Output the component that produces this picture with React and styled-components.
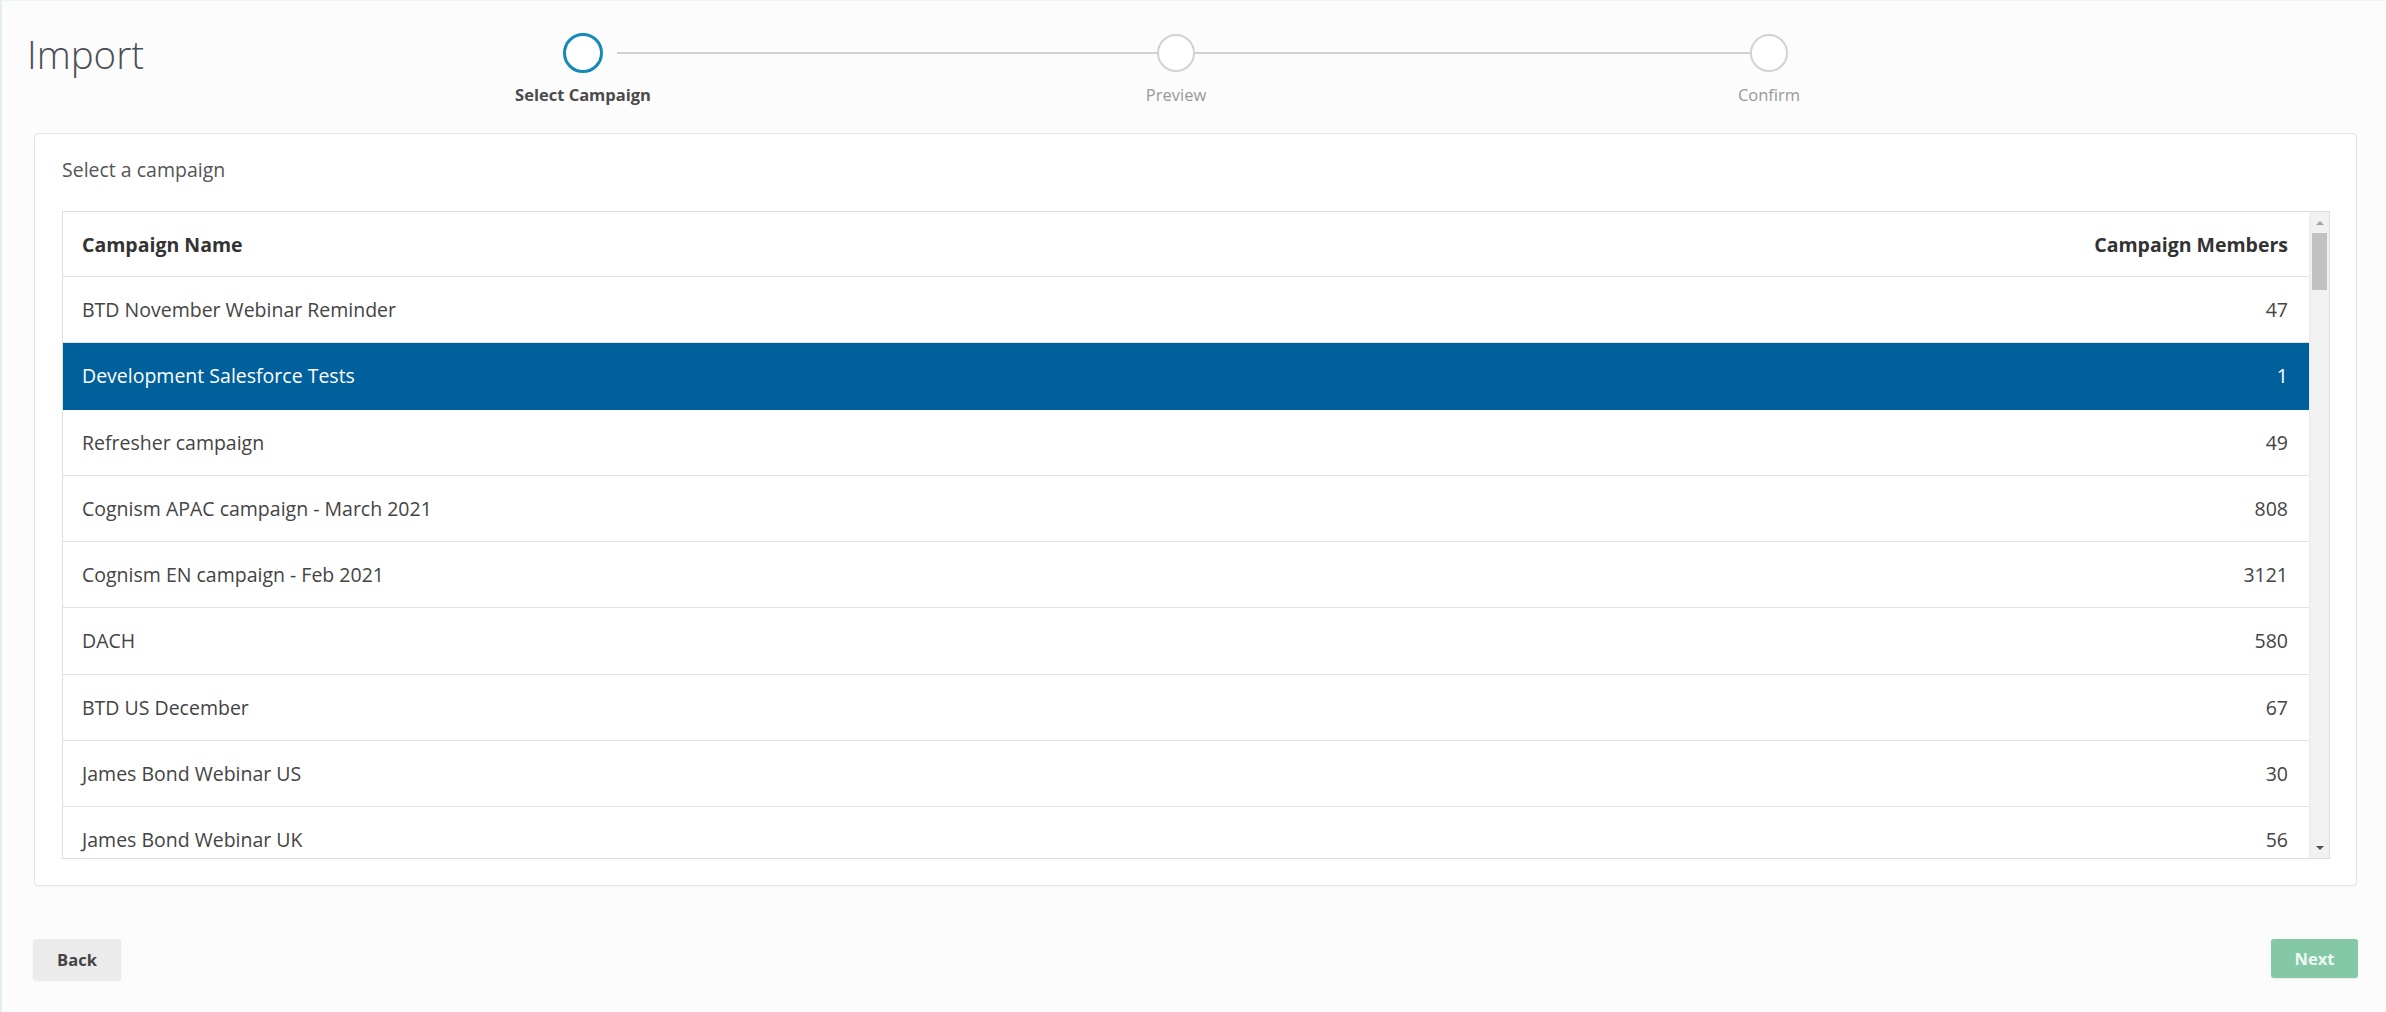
import React from "react";
import styled, { createGlobalStyle } from "styled-components";

const GlobalStyle = createGlobalStyle`
  html, body {
    margin: 0;
    padding: 0;
    background: #fcfcfc;
    font-family: "Open Sans", "Liberation Sans", sans-serif;
  }
  * { box-sizing: border-box; }
`;

const Page = styled.div`
  width: 2386px;
  height: 1012px;
  background: #fcfcfc;
  border-left: 2px solid #e4eef1;
  border-top: 1px solid #eef3f4;
  display: flex;
  flex-direction: column;
  overflow: hidden;
`;

const Header = styled.header`
  display: flex;
  height: 132px;
  padding-left: 25px;
`;

const Title = styled.h1`
  flex: 0 0 259.5px;
  margin: 28.5px 0 0;
  height: 48px;
  font-size: 38.5px;
  line-height: 48px;
  font-weight: 300;
  color: #4a4f55;
`;

const Stepper = styled.ol`
  display: grid;
  grid-template-columns: repeat(3, 593px);
  margin: 0;
  padding: 32px 0 0;
  list-style: none;
`;

const Step = styled.li`
  position: relative;
  display: flex;
  flex-direction: column;
  align-items: center;

  &::after {
    content: "";
    display: ${(p) => (p.$last ? "none" : "block")};
    position: absolute;
    top: 19px;
    height: 2px;
    left: calc(50% + ${(p) => (p.$active ? 34 : 19)}px);
    right: calc(-50% + 19px);
    background: #d2d2d2;
  }
`;

const CircleSlot = styled.div`
  height: 40px;
  display: flex;
  align-items: center;
  justify-content: center;
`;

const Circle = styled.span`
  display: block;
  width: ${(p) => (p.$active ? 40 : 38)}px;
  height: ${(p) => (p.$active ? 40 : 38)}px;
  border-radius: 50%;
  background: #fff;
  border: ${(p) => (p.$active ? "3px solid #138ab9" : "2px solid #d2d2d2")};
`;

const StepLabel = styled.span`
  margin-top: 10px;
  font-size: 16.5px;
  line-height: 23px;
  font-weight: ${(p) => (p.$active ? 700 : 400)};
  color: ${(p) => (p.$active ? "#4a4a4a" : "#999")};
  white-space: nowrap;
`;

const Card = styled.section`
  margin: 0 29px 0 32px;
  height: 753px;
  background: #fff;
  border: 1px solid #e3e3e3;
  border-radius: 4px;
  box-shadow: 0 1px 2px rgba(0, 0, 0, 0.03);
  padding: 23px 26px 27px 27px;
  display: flex;
  flex-direction: column;
`;

const CardLabel = styled.div`
  font-size: 19.5px;
  line-height: 26px;
  color: #555;
  margin-bottom: 28px;
`;

const TableFrame = styled.div`
  height: 648px;
  border: 1px solid #dedede;
  display: flex;
  background: #fff;
`;

const TableBody = styled.div`
  flex: 1;
  overflow: hidden;
  display: flex;
  flex-direction: column;
`;

const HeadRow = styled.div`
  flex: 0 0 65px;
  display: flex;
  align-items: center;
  justify-content: space-between;
  padding: 0 21px 0 19px;
  border-bottom: 1px solid #e2e2e2;
  font-size: 19.5px;
  font-weight: 700;
  color: #333;
`;

const Row = styled.div`
  flex: 0 0 66.25px;
  display: flex;
  align-items: center;
  justify-content: space-between;
  padding: 0 21px 0 19px;
  border-bottom: 1px solid ${(p) => (p.$selected ? "#00609c" : "#e2e2e2")};
  background: ${(p) => (p.$selected ? "#00609c" : "#fff")};
  color: ${(p) => (p.$selected ? "#fff" : "#444")};
  font-size: 19.5px;
`;

const Scrollbar = styled.div`
  flex: 0 0 20px;
  display: flex;
  flex-direction: column;
  background: #f1f1f1;
  border-left: 1px solid #ececec;
`;

const ScrollButton = styled.div`
  flex: 0 0 21px;
  display: flex;
  align-items: center;
  justify-content: center;
`;

const Arrow = styled.span`
  width: 0;
  height: 0;
  border-left: 4px solid transparent;
  border-right: 4px solid transparent;
  ${(p) =>
    p.$down
      ? "border-top: 4px solid #505050;"
      : "border-bottom: 4px solid #a3a3a3;"}
`;

const Track = styled.div`
  flex: 1;
  padding: 0 2px;
`;

const Thumb = styled.div`
  height: 57px;
  background: #c1c1c1;
`;

const Footer = styled.footer`
  display: flex;
  justify-content: space-between;
  align-items: flex-start;
  margin-top: 53px;
  padding: 0 28px 0 31px;
`;

const Button = styled.button`
  border: none;
  border-radius: 3px;
  font-family: "Open Sans", "Liberation Sans", sans-serif;
  font-size: 16.5px;
  font-weight: 700;
  cursor: pointer;
  width: ${(p) => (p.$primary ? 87 : 88)}px;
  height: ${(p) => (p.$primary ? 39 : 41)}px;
  background: ${(p) => (p.$primary ? "#84c8a6" : "#ebebeb")};
  color: ${(p) => (p.$primary ? "#eef8f2" : "#444")};
  box-shadow: 0 1px 2px rgba(0, 0, 0, 0.08);
`;

const steps = ["Select Campaign", "Preview", "Confirm"];

const campaigns = [
  ["BTD November Webinar Reminder", 47],
  ["Development Salesforce Tests", 1],
  ["Refresher campaign", 49],
  ["Cognism APAC campaign - March 2021", 808],
  ["Cognism EN campaign - Feb 2021", 3121],
  ["DACH", 580],
  ["BTD US December", 67],
  ["James Bond Webinar US", 30],
  ["James Bond Webinar UK", 56],
];

export default function App() {
  return (
    <>
      <GlobalStyle />
      <Page>
        <Header>
          <Title>Import</Title>
          <Stepper>
            {steps.map((s, i) => (
              <Step key={s} $active={i === 0} $last={i === steps.length - 1}>
                <CircleSlot>
                  <Circle $active={i === 0} />
                </CircleSlot>
                <StepLabel $active={i === 0}>{s}</StepLabel>
              </Step>
            ))}
          </Stepper>
        </Header>
        <Card>
          <CardLabel>Select a campaign</CardLabel>
          <TableFrame>
            <TableBody>
              <HeadRow>
                <span>Campaign Name</span>
                <span>Campaign Members</span>
              </HeadRow>
              {campaigns.map(([name, count], i) => (
                <Row key={name} $selected={i === 1}>
                  <span>{name}</span>
                  <span>{count}</span>
                </Row>
              ))}
            </TableBody>
            <Scrollbar>
              <ScrollButton>
                <Arrow />
              </ScrollButton>
              <Track>
                <Thumb />
              </Track>
              <ScrollButton>
                <Arrow $down />
              </ScrollButton>
            </Scrollbar>
          </TableFrame>
        </Card>
        <Footer>
          <Button>Back</Button>
          <Button $primary>Next</Button>
        </Footer>
      </Page>
    </>
  );
}
